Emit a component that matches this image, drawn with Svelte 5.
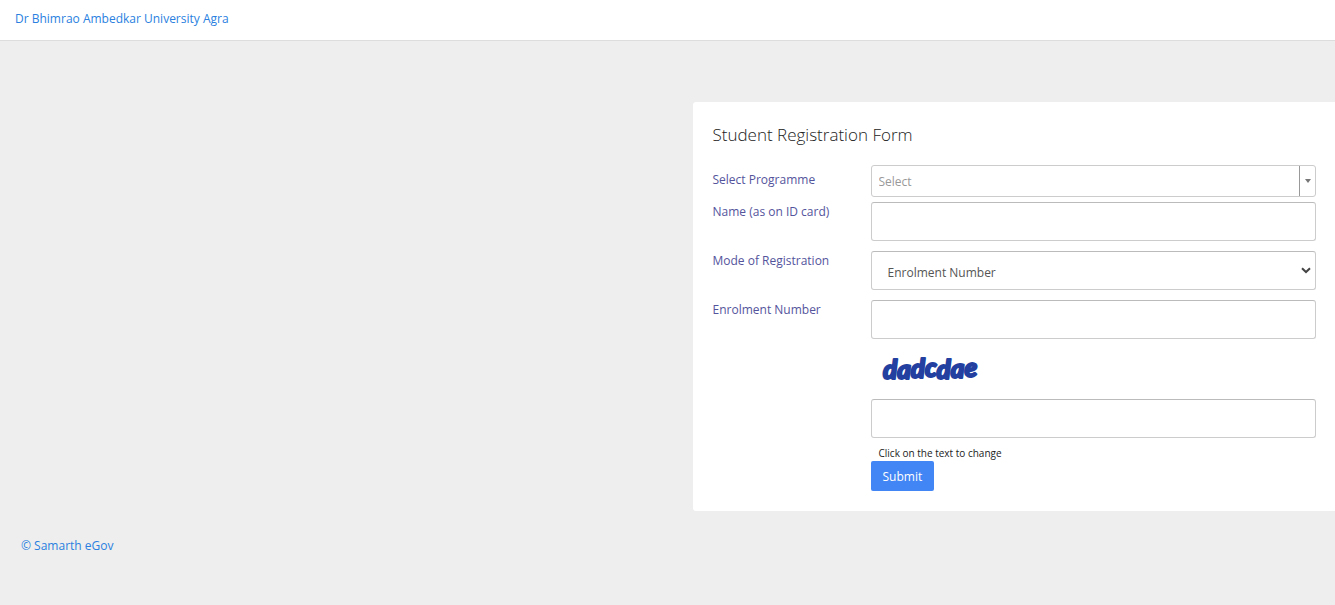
<script>
  const university = 'Dr Bhimrao Ambedkar University Agra';
  const captcha = 'dadcdae';

  let programme = $state('');
  let name = $state('');
  let mode = $state('enrolment');
  let enrolment = $state('');
  let code = $state('');
</script>

<div class="page">
  <header class="navbar">
    <a href="#home">{university}</a>
  </header>

  <main class="content">
    <form class="card" onsubmit={(e) => e.preventDefault()}>
      <h1>Student Registration Form</h1>

      <div class="row row-compact">
        <label for="programme">Select Programme</label>
        <div class="picker">
          <select id="programme" bind:value={programme}>
            <option value="">Select</option>
          </select>
          <span class="picker-arrow" aria-hidden="true"></span>
        </div>
      </div>

      <div class="row">
        <label for="name">Name (as on ID card)</label>
        <input id="name" class="control" type="text" bind:value={name} />
      </div>

      <div class="row">
        <label for="mode">Mode of Registration</label>
        <div class="mode">
          <select id="mode" class="control" bind:value={mode}>
            <option value="enrolment">Enrolment Number</option>
          </select>
          <svg class="chevron" width="10" height="7" viewBox="0 0 10 7" aria-hidden="true">
            <path d="M1 1.2 5 5l4-3.8" />
          </svg>
        </div>
      </div>

      <div class="row">
        <label for="enrolment">Enrolment Number</label>
        <input id="enrolment" class="control" type="text" bind:value={enrolment} />
      </div>

      <div class="verify">
        <button type="button" class="captcha" title="Refresh">
          <svg width="120" height="40" viewBox="0 0 120 40">
            <text x="12" y="30" dy="0 0 -1 -1 2 -1 -1">{captcha}</text>
          </svg>
        </button>
        <input class="control" type="text" aria-label="Verification code" bind:value={code} />
        <p class="hint">Click on the text to change</p>
        <button type="submit" class="submit">Submit</button>
      </div>
    </form>
  </main>

  <footer>
    <a href="#samarth">© Samarth eGov</a>
  </footer>
</div>

<style>
  :global(body) {
    margin: 0;
    background: #eee;
  }

  .page {
    min-height: 100vh;
    overflow: hidden;
    font-family: 'Open Sans', 'Noto Sans', sans-serif;
    font-size: 12px;
    line-height: 20px;
    color: #333;
  }

  .page * {
    box-sizing: border-box;
  }

  a {
    color: #2a7fe0;
    text-decoration: none;
  }

  .navbar {
    height: 41px;
    padding: 9px 15px;
    background: #fff;
    border-bottom: 1px solid #ddd;
  }

  .content {
    margin-left: 50%;
    padding: 61px 0 25px 25px;
  }

  .card {
    padding: 20px 19px 20px 20px;
    background: #fff;
    border-radius: 3px 0 0 3px;
  }

  h1 {
    margin: 0 0 18px;
    font-size: 17px;
    font-weight: 300;
    line-height: 25px;
    color: #222;
  }

  .row {
    display: flex;
    align-items: flex-start;
    margin-bottom: 10px;
  }

  .row-compact {
    margin-bottom: 5px;
  }

  label {
    flex: 0 0 158px;
    color: #54549c;
  }

  .row-compact label {
    padding-top: 5px;
  }

  .control {
    display: block;
    width: 100%;
    min-width: 0;
    height: 39px;
    padding: 6px 12px;
    font: inherit;
    color: #555;
    background: #fff;
    border: 1px solid #ccc;
    border-top-color: #bbb;
    border-radius: 3px;
  }

  .picker {
    display: flex;
    flex: 1;
    height: 32px;
    background: #fff;
    border: 1px solid #ccc;
    border-radius: 3px;
  }

  .picker select {
    flex: 1;
    min-width: 0;
    padding: 1px 7px 0;
    font: inherit;
    color: #999;
    background: none;
    border: 0;
    appearance: none;
  }

  .picker-arrow {
    display: flex;
    align-items: center;
    justify-content: center;
    width: 16px;
    border-left: 1px solid #999;
  }

  .picker-arrow::before {
    content: '';
    border: 3px solid transparent;
    border-top: 4px solid #777;
    border-bottom: 0;
  }

  .mode {
    position: relative;
    flex: 1;
  }

  .mode .control {
    padding: 8px 16px 4px;
    appearance: none;
  }

  .chevron {
    position: absolute;
    top: 16px;
    right: 5px;
    fill: none;
    stroke: #444;
    stroke-width: 2;
    pointer-events: none;
  }

  .verify {
    margin-left: 158px;
  }

  .captcha {
    display: block;
    margin-bottom: 10px;
    padding: 0;
    background: none;
    border: 0;
    cursor: pointer;
  }

  .captcha svg {
    display: block;
  }

  .captcha text {
    font-family: Lato, sans-serif;
    font-size: 26px;
    font-style: italic;
    font-weight: 900;
    fill: #233f9f;
    stroke: #233f9f;
    stroke-width: 2;
    stroke-linejoin: round;
  }

  .hint {
    margin: 8px 0 0;
    padding-left: 8px;
    font-size: 10px;
    line-height: 15px;
    color: #222;
  }

  .submit {
    display: block;
    height: 30px;
    padding: 1px 12px 0;
    font: inherit;
    color: #fff;
    background: #4285f4;
    border: 0;
    border-radius: 2px;
  }

  footer {
    padding: 0 21px;
  }
</style>
